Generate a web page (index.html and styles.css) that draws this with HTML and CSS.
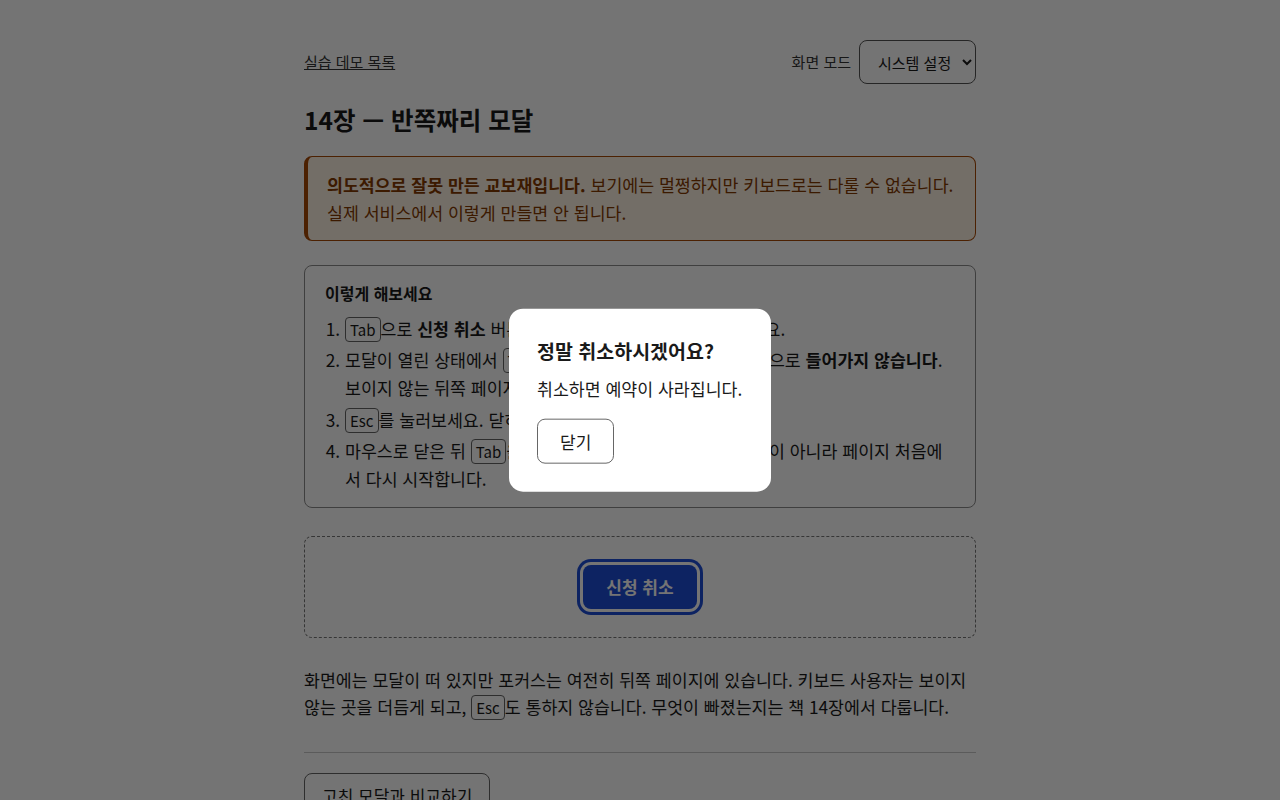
FILE: index.html
```html
<!DOCTYPE html>
<html lang="ko">
<head>
  <meta charset="UTF-8" />
  <meta name="viewport" content="width=device-width, initial-scale=1.0"/>
  <title>14장 — 반쪽짜리 모달</title>
  <link rel="stylesheet" href="styles.css">
</head>
<body>

  <div class="page">
    <div class="topbar">
      <a class="back-link" href="#">실습 데모 목록</a>
      <div class="mode">
        <label for="theme">화면 모드</label>
        <select id="theme">
          <option>시스템 설정</option>
          <option>밝게</option>
          <option>어둡게</option>
        </select>
      </div>
    </div>

    <h1>14장 — 반쪽짜리 모달</h1>

    <div class="warning">
      <strong>의도적으로 잘못 만든 교보재입니다.</strong> 보기에는 멀쩡하지만 키보드로는 다룰 수 없습니다. 실제 서비스에서 이렇게 만들면 안 됩니다.
    </div>

    <div class="steps">
      <p class="steps-title">이렇게 해보세요</p>
      <ol>
        <li><kbd>Tab</kbd>으로 <strong>신청 취소</strong> 버튼까지 가서 Enter 키로 모달을 여세요.</li>
        <li>모달이 열린 상태에서 <kbd>Tab</kbd>을 눌러보세요. 포커스가 모달 안으로 <strong>들어가지 않습니다</strong>. 보이지 않는 뒤쪽 페이지를 돌아다닙니다.</li>
        <li><kbd>Esc</kbd>를 눌러보세요. 닫히지 않습니다.</li>
        <li>마우스로 닫은 뒤 <kbd>Tab</kbd>을 눌러보세요. 포커스는 열었던 버튼이 아니라 페이지 처음에서 다시 시작합니다.</li>
      </ol>
    </div>

    <div class="stage">
      <button class="primary">신청 취소</button>
    </div>

    <p class="note">화면에는 모달이 떠 있지만 포커스는 여전히 뒤쪽 페이지에 있습니다. 키보드 사용자는 보이지 않는 곳을 더듬게 되고, <kbd>Esc</kbd>도 통하지 않습니다. 무엇이 빠졌는지는 책 14장에서 다룹니다.</p>

    <hr>

    <button class="secondary">고친 모달과 비교하기</button>
  </div>

  <!-- the half-done modal: no focus move, no trap, no Esc -->
  <div class="backdrop"></div>
  <div class="modal">
    <h2>정말 취소하시겠어요?</h2>
    <p>취소하면 예약이 사라집니다.</p>
    <button class="secondary">닫기</button>
  </div>

</body>
</html>
```

FILE: styles.css
```css
body {
  margin: 0;
  font-family: "Noto Sans CJK KR", "Noto Sans", sans-serif;
  font-size: 17.3px;
  line-height: 1.6;
  color: #1a1a1a;
  background: #fff;
}

.page {
  max-width: 672px;
  margin: 0 auto;
  padding: 40px 0 40px;
}

.topbar {
  display: flex;
  justify-content: space-between;
  align-items: center;
}

.back-link {
  color: #333;
  font-size: 15px;
}

.mode {
  display: flex;
  align-items: center;
  gap: 8px;
  font-size: 15px;
  color: #333;
}

.mode select {
  height: 44px;
  padding: 0 8px 0 14px;
  font-family: inherit;
  font-size: 15px;
  color: #1a1a1a;
  background: #fff;
  border: 1px solid #555;
  border-radius: 8px;
}

h1 {
  font-size: 24.5px;
  line-height: 34px;
  margin: 19px 0 19px;
}

.warning {
  background: #fdf1e2;
  color: #843900;
  border: 1px solid #a84a06;
  border-left-width: 4px;
  border-radius: 8px;
  padding: 14px 20px 14px 19px;
}

.steps {
  margin-top: 24px;
  border: 1px solid #8c8c8c;
  border-radius: 8px;
  padding: 16px 20px 14px;
}

.steps-title {
  margin: 0 0 10px;
  font-size: 16px;
  font-weight: bold;
  line-height: 1.4;
}

.steps ol {
  margin: 0;
  padding-left: 20px;
}

.steps li + li {
  margin-top: 4px;
}

kbd {
  font-family: inherit;
  font-size: 15px;
  padding: 1px 4px;
  border: 1px solid #666;
  border-radius: 4px;
  background: #fff;
}

.stage {
  margin-top: 28px;
  border: 1px dashed #777;
  border-radius: 8px;
  padding: 28px;
  display: flex;
  justify-content: center;
}

.primary {
  height: 44px;
  padding: 0 23px;
  font-family: inherit;
  font-size: 17px;
  font-weight: bold;
  color: #fff;
  background: #1d4ed8;
  border: none;
  border-radius: 8px;
  box-shadow: 0 0 0 3px #fff, 0 0 0 6px #1d4ed8;
}

.note {
  margin: 28px 0 0;
}

hr {
  border: none;
  border-top: 1px solid #c8c8c8;
  margin: 31px 0 20px;
}

.secondary {
  height: 45px;
  padding: 0 17px;
  font-family: inherit;
  font-size: 17px;
  color: #1a1a1a;
  background: #fff;
  border: 1px solid #666;
  border-radius: 8px;
}

.backdrop {
  position: fixed;
  inset: 0;
  background: rgba(0,0,0,0.545);
}

.modal {
  position: fixed;
  top: 50%;
  left: 50%;
  transform: translate(-50%, -50%);
  background: #fff;
  border-radius: 14px;
  padding: 28px;
  width: 206px;
}

.modal h2 {
  margin: 0;
  font-size: 19.5px;
  line-height: 27px;
}

.modal p {
  margin: 11px 0 16px;
}

.modal .secondary {
  padding: 0 22px;
}
```
